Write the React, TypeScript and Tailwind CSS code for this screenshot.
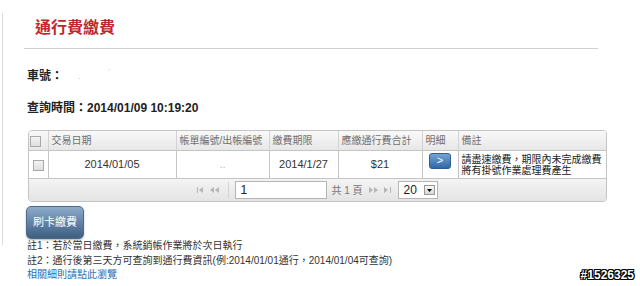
import * as React from "react";

const font = { fontFamily: '"Liberation Sans", "Noto Sans CJK TC", sans-serif' };

function Box({ className = "" }: { className?: string }) {
  return (
    <span
      className={
        "inline-block w-[11px] h-[11px] border border-[#a9a9a9] bg-gradient-to-b from-[#f4f4f4] to-[#dedede] " +
        className
      }
    />
  );
}

function FirstIcon() {
  return (
    <svg width="7" height="6" viewBox="0 0 7 6" className="fill-[#b5b5b5]">
      <rect x="0" y="0" width="1" height="6" />
      <polygon points="6,0 6,6 2,3" />
    </svg>
  );
}

function PrevIcon() {
  return (
    <svg width="9" height="6" viewBox="0 0 9 6" className="fill-[#b5b5b5]">
      <polygon points="4,0 4,6 0,3" />
      <polygon points="9,0 9,6 5,3" />
    </svg>
  );
}

function NextIcon() {
  return (
    <svg width="9" height="6" viewBox="0 0 9 6" className="fill-[#b5b5b5]">
      <polygon points="0,0 0,6 4,3" />
      <polygon points="5,0 5,6 9,3" />
    </svg>
  );
}

function LastIcon() {
  return (
    <svg width="7" height="6" viewBox="0 0 7 6" className="fill-[#b5b5b5]">
      <polygon points="0,0 0,6 4,3" />
      <rect x="6" y="0" width="1" height="6" />
    </svg>
  );
}

const headCell = "border-r border-[#d2d2d2] px-[3px] text-left font-normal text-[10px] text-[#6f6f6f] leading-[19px]";
const bodyCell = "border-r border-[#c4c4c4] text-center text-[11px] text-[#333]";

export default function App() {
  return (
    <div className="relative w-[640px] h-[286px] overflow-hidden bg-white flex" style={font}>
      <div className="w-[2px]" />
      <div className="w-px h-[232px] mt-[13px] bg-[#dcdcdc]" />

      <div className="ml-[21px] pt-[19px] flex flex-col">
        <h1 className="pl-[11px] text-[16px] leading-[18px] text-[#c1282e] font-semibold">通行費繳費</h1>
        <div className="mt-[11px] w-[574px] h-px bg-[#cfcfcf]" />

        <div className="mt-[19px] pl-[3px] text-[12px] leading-[16px] text-[#222] flex items-center">
          <span className="font-bold">車號：</span>
          <span className="ml-[15px] text-[#ccc] text-[9px]">.</span>
          <span className="ml-[27px] text-[#ccc] text-[9px] -mt-[6px]">ˊ</span>
        </div>

        <div className="mt-[16px] pl-[3px] text-[12px] leading-[16px] text-[#222] font-bold">
          查詢時間：2014/01/09 10:19:20
        </div>

        <div className="mt-[14px] ml-[4px] w-[579px] border border-[#c4c4c4] rounded-[4px] overflow-hidden">
          <table className="w-full table-fixed border-collapse">
            <colgroup>
              <col className="w-[19px]" />
              <col className="w-[128px]" />
              <col className="w-[93px]" />
              <col className="w-[69px]" />
              <col className="w-[84px]" />
              <col className="w-[36px]" />
              <col />
            </colgroup>
            <thead>
              <tr className="h-[19px] bg-gradient-to-b from-[#f9f9f9] to-[#e7e7e7] border-b border-[#c4c4c4]">
                <th className={headCell + " pl-[1px]"}>
                  <Box className="align-middle" />
                </th>
                <th className={headCell}>交易日期</th>
                <th className={headCell}>帳單編號/出帳編號</th>
                <th className={headCell}>繳費期限</th>
                <th className={headCell}>應繳通行費合計</th>
                <th className={headCell}>明細</th>
                <th className={headCell + " border-r-0"}>備註</th>
              </tr>
            </thead>
            <tbody>
              <tr className="h-[28px] bg-white border-b border-[#c4c4c4]">
                <td className={bodyCell + " pl-[1px]"}>
                  <Box className="align-middle" />
                </td>
                <td className={bodyCell}>2014/01/05</td>
                <td className={bodyCell + " text-[#bbb]"}>..</td>
                <td className={bodyCell}>2014/1/27</td>
                <td className={bodyCell}>$21</td>
                <td className={bodyCell + " align-top pt-[1px]"}>
                  <span className="inline-flex items-center justify-center w-[22px] h-[16px] rounded-[3px] border border-[#2f5d8e] bg-gradient-to-b from-[#74a2d4] to-[#2f6aa6] text-white text-[11px] leading-none">
                    &gt;
                  </span>
                </td>
                <td className="px-[3px] text-left text-[10px] leading-[11px] text-[#222]">
                  請盡速繳費，期限內未完成繳費
                  <br />
                  將有掛號作業處理費產生
                </td>
              </tr>
            </tbody>
          </table>
          <div className="h-[22px] bg-gradient-to-b from-[#f4f4f4] to-[#e4e4e4] flex items-center justify-center text-[10px] text-[#777]">
            <div className="flex items-center gap-[6px]">
              <FirstIcon />
              <PrevIcon />
            </div>
            <div className="ml-[9px] w-px h-[16px] bg-[#d4d4d4]" />
            <div className="ml-[6px] w-[92px] h-[18px] bg-white border border-[#b5b5b5] text-[12px] text-[#222] leading-[16px] pl-[4px]">
              1
            </div>
            <span className="ml-[4px]">共 1 頁</span>
            <div className="ml-[6px] flex items-center gap-[6px]">
              <NextIcon />
              <LastIcon />
            </div>
            <div className="ml-[7px] w-[40px] h-[18px] bg-white border border-[#b5b5b5] flex items-center justify-between pl-[5px] pr-[2px]">
              <span className="text-[12px] text-[#222] leading-none">20</span>
              <span className="w-[11px] h-[10px] border border-[#999] bg-gradient-to-b from-[#fafafa] to-[#d6d6d6] flex items-center justify-center">
                <svg width="5" height="3" viewBox="0 0 5 3" className="fill-black">
                  <polygon points="0,0 5,0 2.5,3" />
                </svg>
              </span>
            </div>
          </div>
        </div>

        <div className="mt-[4px] ml-[2px] w-[58px] h-[33px] rounded-[5px] border border-[#4b6b90] bg-gradient-to-b from-[#8eabca] to-[#3e5e82] shadow-[0_1px_2px_rgba(0,0,0,0.3)] flex items-center justify-center text-white text-[11px]">
          刷卡繳費
        </div>

        <div className="pl-[3px] text-[10px] leading-[14.5px] text-[#333]">
          <p>註1：若於當日繳費，系統銷帳作業將於次日執行</p>
          <p>註2：通行後第三天方可查詢到通行費資訊(例:2014/01/01通行，2014/01/04可查詢)</p>
          <p className="text-[#2a6db5]">相關細則請點此瀏覽</p>
        </div>
      </div>

      <div className="absolute right-[6px] bottom-[5px] text-[12px] font-bold text-white leading-none [text-shadow:1px_0_0_#000,-1px_0_0_#000,0_1px_0_#000,0_-1px_0_#000,1px_1px_0_#000,-1px_-1px_0_#000,1px_-1px_0_#000,-1px_1px_0_#000]">
        #1526325
      </div>
    </div>
  );
}
